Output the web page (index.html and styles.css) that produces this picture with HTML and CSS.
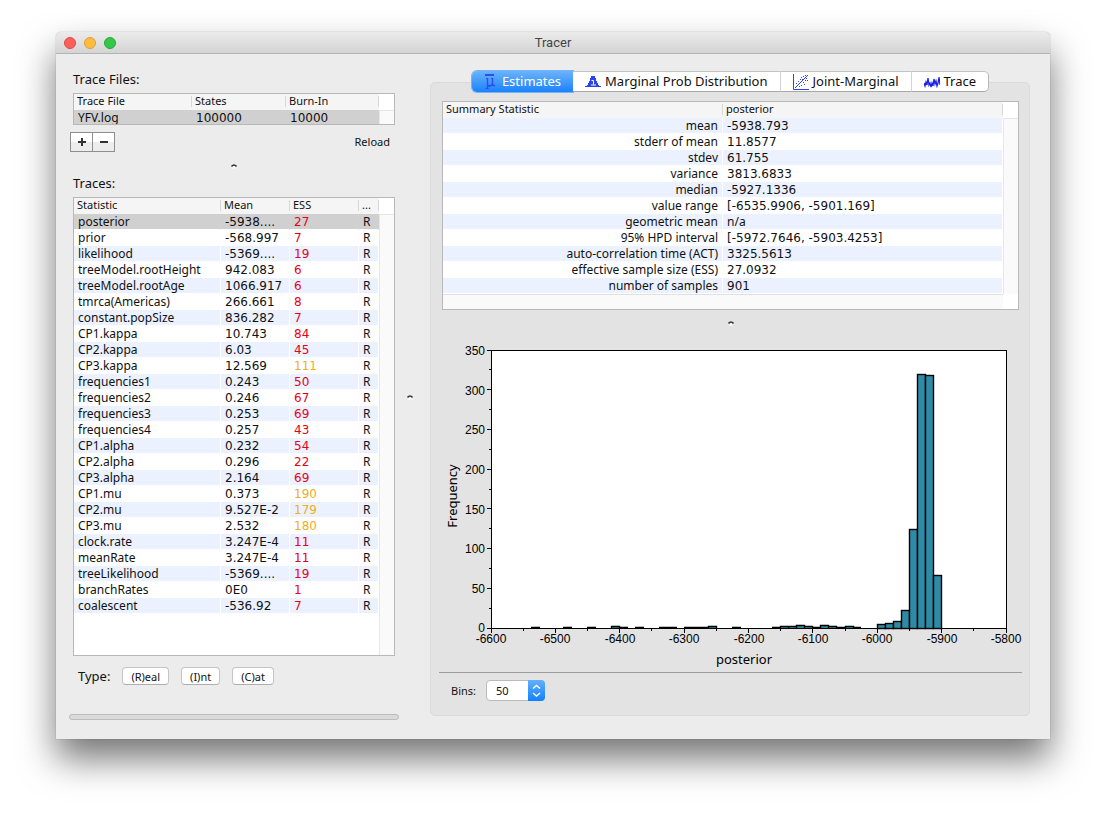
FILE: index.html
```html
<!DOCTYPE html>
<html lang="en">
<head>
<meta charset="utf-8">
<title>Tracer</title>
<link rel="stylesheet" href="styles.css">
</head>
<body>
<main class="window">
  <header class="titlebar">
    <div class="lights">
      <button class="light close" type="button" aria-label="Close"></button>
      <button class="light minimise" type="button" aria-label="Minimise"></button>
      <button class="light maximise" type="button" aria-label="Maximise"></button>
    </div>
    <h1 class="title">Tracer</h1>
  </header>

  <div class="content">
    <section class="sidebar">
      <h2 class="label">Trace Files:</h2>
      <div class="table-box files-box">
        <table class="grid files">
          <colgroup><col class="c-file"><col class="c-states"><col></colgroup>
          <thead><tr><th>Trace File</th><th>States</th><th>Burn-In</th></tr></thead>
          <tbody><tr class="selected"><td>YFV.log</td><td class="num">100000</td><td class="num">10000</td></tr></tbody>
        </table>
        <div class="scroll"></div>
      </div>
      <div class="file-actions">
        <div class="plusminus">
          <button type="button" aria-label="Add"><svg width="10" height="10"><path d="M1 5h8M5 1v8" stroke="#333" stroke-width="2"/></svg></button>
          <button type="button" aria-label="Remove"><svg width="10" height="10"><path d="M1 5h8" stroke="#333" stroke-width="2"/></svg></button>
        </div>
        <button class="reload" type="button">Reload</button>
      </div>
      <div class="split side-split"><svg class="grip" width="6" height="6"><path d="M1 5.5Q3 1.5 5 5.5" fill="#fff"/><path d="M.5 3.500Q3 .500 5.500 3.500" fill="none" stroke="#333" stroke-width="1.600"/></svg></div>

      <h2 class="label">Traces:</h2>
      <div class="table-box traces-box">
        <table class="grid traces">
          <colgroup><col><col class="c-mean"><col class="c-ess"><col class="c-type"></colgroup>
          <thead><tr><th>Statistic</th><th>Mean</th><th>ESS</th><th>...</th></tr></thead>
          <tbody>
            <tr class="selected"><td>posterior</td><td class="num">-5938....</td><td class="num low">27</td><td>R</td></tr>
            <tr><td>prior</td><td class="num">-568.997</td><td class="num low">7</td><td>R</td></tr>
            <tr><td>likelihood</td><td class="num">-5369....</td><td class="num low">19</td><td>R</td></tr>
            <tr><td>treeModel.rootHeight</td><td class="num">942.083</td><td class="num low">6</td><td>R</td></tr>
            <tr><td>treeModel.rootAge</td><td class="num">1066.917</td><td class="num low">6</td><td>R</td></tr>
            <tr><td>tmrca(Americas)</td><td class="num">266.661</td><td class="num low">8</td><td>R</td></tr>
            <tr><td>constant.popSize</td><td class="num">836.282</td><td class="num low">7</td><td>R</td></tr>
            <tr><td>CP1.kappa</td><td class="num">10.743</td><td class="num low">84</td><td>R</td></tr>
            <tr><td>CP2.kappa</td><td class="num">6.03</td><td class="num low">45</td><td>R</td></tr>
            <tr><td>CP3.kappa</td><td class="num">12.569</td><td class="num medium">111</td><td>R</td></tr>
            <tr><td>frequencies1</td><td class="num">0.243</td><td class="num low">50</td><td>R</td></tr>
            <tr><td>frequencies2</td><td class="num">0.246</td><td class="num low">67</td><td>R</td></tr>
            <tr><td>frequencies3</td><td class="num">0.253</td><td class="num low">69</td><td>R</td></tr>
            <tr><td>frequencies4</td><td class="num">0.257</td><td class="num low">43</td><td>R</td></tr>
            <tr><td>CP1.alpha</td><td class="num">0.232</td><td class="num low">54</td><td>R</td></tr>
            <tr><td>CP2.alpha</td><td class="num">0.296</td><td class="num low">22</td><td>R</td></tr>
            <tr><td>CP3.alpha</td><td class="num">2.164</td><td class="num low">69</td><td>R</td></tr>
            <tr><td>CP1.mu</td><td class="num">0.373</td><td class="num medium">190</td><td>R</td></tr>
            <tr><td>CP2.mu</td><td class="num">9.527E-2</td><td class="num medium">179</td><td>R</td></tr>
            <tr><td>CP3.mu</td><td class="num">2.532</td><td class="num medium">180</td><td>R</td></tr>
            <tr><td>clock.rate</td><td class="num">3.247E-4</td><td class="num low">11</td><td>R</td></tr>
            <tr><td>meanRate</td><td class="num">3.247E-4</td><td class="num low">11</td><td>R</td></tr>
            <tr><td>treeLikelihood</td><td class="num">-5369....</td><td class="num low">19</td><td>R</td></tr>
            <tr><td>branchRates</td><td class="num">0E0</td><td class="num low">1</td><td>R</td></tr>
            <tr><td>coalescent</td><td class="num">-536.92</td><td class="num low">7</td><td>R</td></tr>
          </tbody>
        </table>
        <div class="scroll"></div>
      </div>
      <div class="type-row">
        <span class="type-label">Type:</span>
        <button class="push" type="button">(R)eal</button>
        <button class="push" type="button">(I)nt</button>
        <button class="push" type="button">(C)at</button>
      </div>
      <div class="progress"></div>
    </section>

    <div class="main-split"><svg class="grip" width="6" height="6"><path d="M1 5.5Q3 1.5 5 5.5" fill="#fff"/><path d="M.5 3.500Q3 .500 5.500 3.500" fill="none" stroke="#333" stroke-width="1.600"/></svg></div>

    <section class="panel">
      <nav class="tabs" role="tablist">
        <button class="tab active" type="button" role="tab" aria-selected="true">
          <svg width="12" height="16"><g fill="none" stroke="#2f4cee"><path d="M1 1h9" stroke-width="2"/><path d="M2 4.500h2M7 4.500h2M1.500 14.500h3"/><path d="M3.500 4v11M8.500 4v7.500h2.500M3.500 10.500Q4 12 6 12Q8 11.500 8.500 9.500" stroke-width="1.400"/></g></svg>
          Estimates
        </button>
        <button class="tab" type="button" role="tab">
          <svg width="16" height="12"><path d="M0 11V10H2V9H3V7H4V5H5V2H6V0H10V2H11V5H12V7H13V9H14V10H16V11Z" fill="#2b44f0"/><path d="M6.500 4.500h2V8.500M6 9h5" stroke="#fff" fill="none"/></svg>
          Marginal Prob Distribution
        </button>
        <button class="tab" type="button" role="tab">
          <svg width="16" height="16"><path d="M.5 0V15.500H16M2 14L15 1" stroke="#2b44f0" fill="none"/><path d="M3 9h1v1h-1zM5 7h1v1h-1zM4 11h1v1h-1zM7 5h1v1h-1zM8 3h1v1h-1zM10 2h1v1h-1zM12 1h1v1h-1zM9 5h1v1h-1zM6 9h1v1h-1zM8 11h1v1h-1zM10 8h1v1h-1zM12 6h1v1h-1zM13 4h1v1h-1zM11 10h1v1h-1zM6 12h1v1h-1zM14 6h1v1h-1z" fill="#2b44f0"/></svg>
          Joint-Marginal
        </button>
        <button class="tab" type="button" role="tab">
          <svg width="16" height="12"><path d="M0 7L1 10L2 6L3 9L4 2L5 9L6 7L7 11L8 7L9 10L10 3L11 8L12 5L13 10L14 7L15 1L16 9" stroke="#1a22e8" fill="none" stroke-width="1.300"/></svg>
          Trace
        </button>
      </nav>

      <div class="table-box summary-box">
        <table class="grid summary">
          <colgroup><col class="c-half"><col></colgroup>
          <thead><tr><th>Summary Statistic</th><th>posterior</th></tr></thead>
          <tbody>
            <tr><td>mean</td><td class="num">-5938.793</td></tr>
            <tr><td>stderr of mean</td><td class="num">11.8577</td></tr>
            <tr><td>stdev</td><td class="num">61.755</td></tr>
            <tr><td>variance</td><td class="num">3813.6833</td></tr>
            <tr><td>median</td><td class="num">-5927.1336</td></tr>
            <tr><td>value range</td><td class="num">[-6535.9906, -5901.169]</td></tr>
            <tr><td>geometric mean</td><td>n/a</td></tr>
            <tr><td>95% HPD interval</td><td class="num">[-5972.7646, -5903.4253]</td></tr>
            <tr><td>auto-correlation time (ACT)</td><td class="num">3325.5613</td></tr>
            <tr><td>effective sample size (ESS)</td><td class="num">27.0932</td></tr>
            <tr><td>number of samples</td><td class="num">901</td></tr>
          </tbody>
        </table>
        <div class="scroll"></div>
        <div class="scroll-h"></div>
        <div class="scroll-corner"></div>
      </div>

      <div class="split panel-split"><svg class="grip" width="6" height="6"><path d="M1 5.5Q3 1.5 5 5.5" fill="#fff"/><path d="M.5 3.500Q3 .500 5.500 3.500" fill="none" stroke="#333" stroke-width="1.600"/></svg></div>

      <svg class="chart" viewBox="439 335 583 337" role="img" aria-label="Histogram of posterior">
        <rect x="491.500" y="350.500" width="515" height="278" fill="#fff"/>
        <g class="bars">
          <path d="M531 627.500h9M563 627.500h9M587 627.500h9M620 627.500h8M635 627.500h9M659 627.500h18M684 627.500h24M732 627.500h9M772 627.500h8M812 627.500h8M837 627.500h8M853 627.500h8"/>
          <path d="M611.500 628.500v-2h8v2M708.500 628.500v-2h8v2M780.500 628.500v-2h8v2M788.500 628.500v-2h8v2M796.500 628.500v-3h8v3M804.500 628.500v-2h8v2M820.500 628.500v-3h8v3M828.500 628.500v-2h8v2M845.500 628.500v-2h8v2"/>
          <rect x="877.500" y="624.500" width="8" height="4"/>
          <rect x="885.500" y="623.500" width="8" height="5"/>
          <rect x="893.500" y="621.500" width="8" height="7"/>
          <rect x="901.500" y="610.500" width="8" height="18"/>
          <rect x="909.500" y="529.500" width="8" height="99"/>
          <rect x="917.500" y="374.500" width="8" height="254"/>
          <rect x="925.500" y="375.500" width="8" height="253"/>
          <rect x="933.500" y="575.500" width="8" height="53"/>
        </g>
        <rect class="axis" x="491.500" y="350.500" width="515" height="278"/>
        <path class="axis" d="M487 350.500h4M487 389.500h4M487 429.500h4M487 469.500h4M487 508.500h4M487 548.500h4M487 588.500h4M487 628.500h4M489 369.500h2M489 409.500h2M489 449.500h2M489 489.500h2M489 528.500h2M489 568.500h2M489 608.500h2"/>
        <path class="axis" d="M491.500 629v4M555.500 629v4M619.500 629v4M684.500 629v4M748.500 629v4M812.500 629v4M877.500 629v4M941.500 629v4M1006.500 629v4M523.500 629v2M587.500 629v2M651.500 629v2M716.500 629v2M780.500 629v2M845.500 629v2M909.500 629v2M973.500 629v2"/>
        <g class="ticks ticks-y">
          <text x="485" y="355">350</text><text x="485" y="395">300</text><text x="485" y="434">250</text><text x="485" y="474">200</text><text x="485" y="514">150</text><text x="485" y="553">100</text><text x="485" y="593">50</text><text x="485" y="632">0</text>
        </g>
        <g class="ticks ticks-x">
          <text x="491" y="643">-6600</text><text x="555" y="643">-6500</text><text x="620" y="643">-6400</text><text x="684" y="643">-6300</text><text x="749" y="643">-6200</text><text x="813" y="643">-6100</text><text x="877" y="643">-6000</text><text x="942" y="643">-5900</text><text x="1006" y="643">-5800</text>
        </g>
        <text class="axis-title" x="744" y="664">posterior</text>
        <text class="axis-title" transform="translate(457 496) rotate(-90)">Frequency</text>
      </svg>

      <footer class="bins">
        <label for="bins">Bins:</label>
        <span class="select">
          <select id="bins"><option>50</option></select>
          <svg class="arrows" width="17" height="21"><path d="M5 8.500L8.500 5.500L12 8.500M5 13L8.500 16L12 13" fill="none" stroke="#fff" stroke-width="1.500"/></svg>
        </span>
      </footer>
    </section>
  </div>
</main>
</body>
</html>
```

FILE: styles.css
```css
* { box-sizing: border-box; }

body {
  margin: 0;
  padding: 32px 56px 80px;
  background: #fff;
  color: #111;
  font: 12px/15px "Noto Sans", "Open Sans", sans-serif;
}

button, select { font: inherit; color: inherit; margin: 0; padding: 0; border: 0; background: none; }
svg { display: block; flex: none; }

.window {
  background: #ececec;
  border-radius: 5px 5px 0 0;
  box-shadow: 0 0 1px rgba(0, 0, 0, .5), 0 20px 36px rgba(0, 0, 0, .54);
}

.titlebar {
  display: grid;
  grid-template-columns: 1fr auto 1fr;
  align-items: center;
  height: 22px;
  padding: 0 8px;
  background: linear-gradient(#ebebeb, #d4d4d4);
  border-bottom: 1px solid #b4b4b4;
  border-radius: 5px 5px 0 0;
}
.title { margin: 0; font: 13px/17px Roboto, sans-serif; color: #444; }
.lights { display: flex; gap: 8px; }
.light { width: 12px; height: 12px; border-radius: 50%; }
.close { background: #fc605b; border: 1px solid #e04844; }
.minimise { background: #fdbc40; border: 1px solid #dfa032; }
.maximise { background: #34c84a; border: 1px solid #27a838; }

.content {
  display: grid;
  grid-template-columns: minmax(0, 330fr) 31px minmax(0, 600fr);
  padding: 0 20px 0 13px;
}

/* left column */
.sidebar { padding: 18px 0 19px; }
.label { margin: 0 4px 6px; font-size: 13px; line-height: 15px; font-weight: 400; }

.table-box {
  display: grid;
  grid-template-columns: minmax(0, 1fr) 15px;
  background: #fff;
  border: 1px solid #b8b8b8;
}
.files-box, .traces-box { margin: 0 4px; }
.files-box { height: 32px; overflow: hidden; }
.traces-box { height: 459px; }

.scroll { margin-top: 16px; background: #fafafa; border-left: 1px solid #e8e8e8; border-top: 1px solid #e8e8e8; }
.scroll-h { height: 15px; background: #fafafa; border-top: 1px solid #e0e0e0; }
.scroll-corner { background: #fff; }

.grid { width: 100%; table-layout: fixed; border-collapse: separate; border-spacing: 0; align-self: start; }
.grid th {
  height: 16px;
  padding: 0 3px;
  background: linear-gradient(#d8d8d8, #d8d8d8) right 2px / 1px 11px no-repeat #f5f5f5;
  font-size: 11px;
  line-height: 13px;
  font-weight: 400;
  text-align: left;
  vertical-align: top;
}
.grid td {
  height: 16px;
  padding: 0 4px;
  border-right: 1px solid #fff;
  border-bottom: 1px solid #fff;
  line-height: 15px;
  white-space: nowrap;
}
.grid td.num { padding-top: 2px; font-family: "DejaVu Sans", sans-serif; line-height: 13px; }
.traces tbody tr:nth-child(odd) td, .summary tbody tr:nth-child(odd) td { background-color: #ebf1fe; }
.grid tbody tr.selected td { background-color: #d0d0d0; border-right-color: #d0d0d0; }
.low { color: #e60012; }
.medium { color: #f0ae1c; }

.c-file { width: 118px; }
.c-states { width: 94px; }
.c-mean { width: 69px; }
.c-ess { width: 69px; }
.c-type { width: 20px; }
.c-half { width: 50%; }

.file-actions { display: flex; justify-content: space-between; align-items: center; margin: 7px 9px 0 1px; }
.plusminus { display: flex; border: 1px solid #8e8e8e; }
.plusminus button {
  display: grid;
  place-items: center;
  width: 21px;
  height: 18px;
  background: linear-gradient(#fff 50%, #ededed 50%);
}
.plusminus button + button { width: 22px; border-left: 1px solid #8e8e8e; }
.reload { padding-bottom: 2px; font-size: 11px; }

.split { display: flex; justify-content: center; align-items: center; height: 24px; }
.side-split { padding-top: 4px; }

.type-row { display: flex; align-items: center; gap: 12px; margin: 11px 9px 0; }
.type-label { font-size: 13px; }
.push {
  height: 18px;
  padding: 0 8px;
  background: #fff;
  border: 1px solid #c4c4c4;
  border-bottom-color: #adadad;
  border-radius: 4px;
  font-size: 11px;
  line-height: 15px;
}
.progress { height: 6px; margin-top: 29px; background: #dadada; border: 1px solid #bcbcbc; border-radius: 3px; }

.main-split { display: flex; align-items: center; padding-left: 8px; }

/* right panel */
.panel {
  margin: 28px 0 23px;
  padding: 0 7px 0 8px;
  background: #e3e3e3;
  border: 1px solid #dadada;
  border-radius: 5px;
}
.tabs { display: flex; justify-content: center; margin-top: -12px; }
.tab {
  display: flex;
  align-items: center;
  justify-content: center;
  gap: 4px;
  height: 21px;
  padding: 0 12px;
  background: #fff;
  border: 1px solid #c2c2c2;
  border-left: 0;
  border-bottom-color: #a8a8a8;
  font-size: 13px;
  white-space: nowrap;
}
.tab + .tab { border-right-color: #d4d4d4; }
.tab:last-child { border-right-color: #b8b8b8; border-radius: 0 5px 5px 0; }
.tab.active {
  gap: 6px;
  background: linear-gradient(#6cb3fa, #1a82fd);
  border: 0;
  border-radius: 5px 0 0 5px;
  box-shadow: 0 0 0 1px #74b4f5;
  color: #fff;
}

.summary-box { margin: 9px 3px 0; }
.summary td:first-child { text-align: right; }

.panel-split { height: 25px; }
.chart { width: 100%; height: auto; }
.bars rect, .bars path { fill: #2e8ba6; stroke: #000; stroke-width: 1.4; }
.axis { fill: none; stroke: #000; }
.ticks { font: 12px "Liberation Sans", sans-serif; }
.ticks-y { text-anchor: end; }
.ticks-x { text-anchor: middle; }
.axis-title { font: 13px "Noto Sans", sans-serif; text-anchor: middle; }

.bins {
  display: flex;
  align-items: center;
  gap: 10px;
  height: 43px;
  padding: 0 12px 8px;
  border-top: 1px solid #9c9c9c;
  font-size: 11px;
}
.select { position: relative; }
.select select {
  display: block;
  appearance: none;
  width: 59px;
  height: 21px;
  padding-left: 9px;
  background: #fff;
  border: 1px solid #bbb;
  border-radius: 4px;
}
.arrows {
  position: absolute;
  top: 0;
  right: 0;
  background: linear-gradient(#63b0fb, #1380ff);
  border-radius: 0 4px 4px 0;
  pointer-events: none;
}
```
